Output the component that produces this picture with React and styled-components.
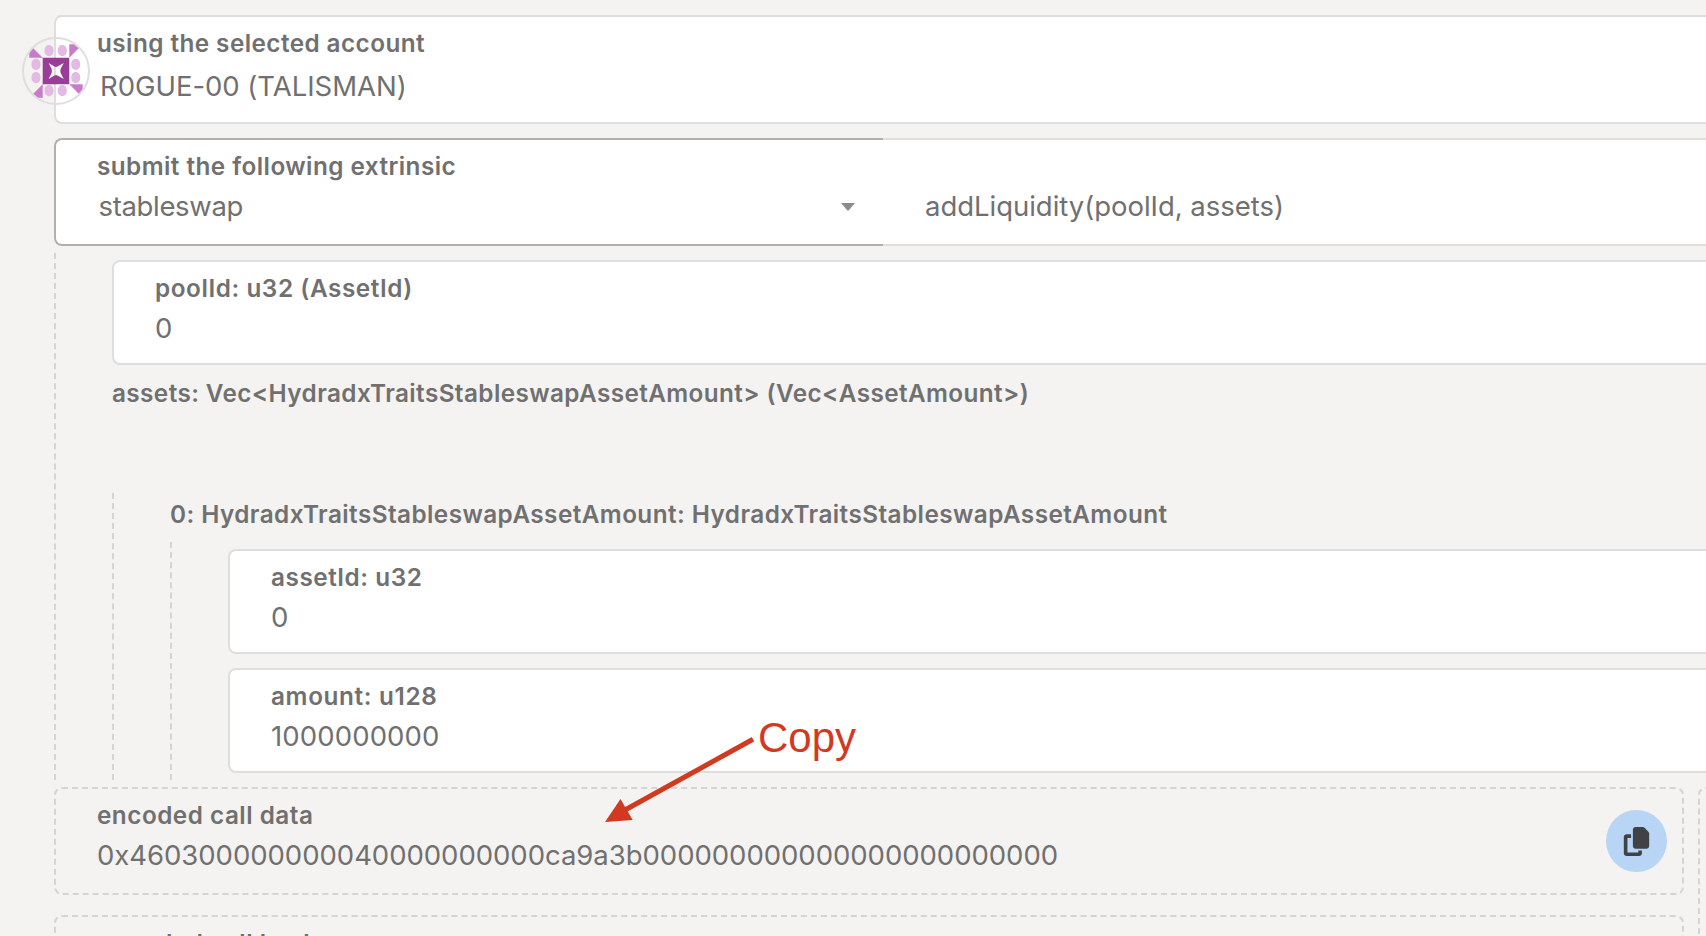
import React from "react";
import styled, { createGlobalStyle } from "styled-components";
import { FaCopy } from "react-icons/fa6";

const GlobalStyle = createGlobalStyle`
  *, *::before, *::after { box-sizing: border-box; }
  body { margin: 0; background: #f4f3f1; overflow: hidden; }
`;

const Page = styled.main`
  position: relative;
  height: 936px;
  overflow: hidden;
  padding: 15px 0 0 54px;
  color: #707070;
  font-family: Inter, "Noto Sans", sans-serif;
`;

const Form = styled.div`
  display: flex;
  flex-direction: column;
  width: 1692px;
`;

const Label = styled.div`
  font-size: 24.3px;
  font-weight: 600;
  line-height: 30px;
  letter-spacing: ${(p) => p.$track || 0}px;
  white-space: pre;
`;

const Value = styled.div`
  margin: ${(p) => p.$top ?? 8}px 0 0 ${(p) => p.$indent || 0}px;
  font-size: 27.5px;
  line-height: 34px;
  letter-spacing: ${(p) => p.$track || 0}px;
  white-space: pre;
`;

const Field = styled.section`
  position: relative;
  height: ${(p) => p.$height || 105}px;
  padding: 11px 41px 0;
  background: #fff;
  border: 2px solid #dedede;
  border-radius: 8px;
`;

const Avatar = styled.svg`
  position: absolute;
  top: 20px;
  left: -34px;
  width: 68px;
  height: 68px;
`;

const ExtrinsicRow = styled.div`
  display: flex;
  height: 108px;
  margin-top: 14px;
`;

const ModuleSelect = styled(Field)`
  width: 829px;
  height: 108px;
  border-color: #b0b0b0;
  border-right: 0;
  border-radius: 8px 0 0 8px;
`;

const SelectLine = styled.div`
  display: flex;
  justify-content: space-between;
  align-items: center;
`;

const Caret = styled.svg`
  width: 14px;
  height: 8px;
  margin: 10px -13px 0 0;
`;

const MethodSelect = styled(Field)`
  flex: 1;
  height: 108px;
  padding-top: 41px;
  border-left: 0;
  border-radius: 0 8px 8px 0;
`;

const Nest = styled.div`
  display: flex;
  flex-direction: column;
  margin-top: ${(p) => p.$gap}px;
  padding: ${(p) => p.$top}px 0 0 56px;
  border-left: 2px dashed #d4d4d3;
`;

const FieldStack = styled.div`
  display: flex;
  flex-direction: column;
  gap: 14px;
  padding-bottom: 7px;
`;

const Heading = styled(Label)`
  margin-top: ${(p) => p.$top}px;
`;

const Outputs = styled.div`
  display: flex;
  gap: 14px;
  margin-top: 7px;
`;

const OutputColumn = styled.div`
  display: flex;
  flex-direction: column;
  gap: 20px;
  width: 1630px;
`;

const Output = styled(Field)`
  height: ${(p) => p.$height || 108}px;
  background: transparent;
  border: 2px dashed #d4d4d3;
`;

const SideOutput = styled(Output)`
  width: 48px;
  height: 236px;
  padding: 0;
`;

const OutputBody = styled.div`
  display: flex;
  justify-content: space-between;
`;

const CopyButton = styled.button`
  display: grid;
  place-items: center;
  width: 61px;
  height: 62px;
  margin: 10px -26px 0 0;
  padding: 0;
  border: 0;
  border-radius: 50%;
  background: #b8d5f5;
  color: #3f4347;
  font-size: 29px;
`;

const Annotation = styled.div`
  position: absolute;
  top: 714px;
  left: 600px;
  width: 270px;
  height: 116px;
  color: #d13a21;
`;

const Arrow = styled.svg`
  display: block;
  width: 160px;
  height: 116px;
`;

const Note = styled.span`
  position: absolute;
  top: 0;
  left: 158px;
  font: 42px/48px "Liberation Sans", Arial, sans-serif;
`;

const dots = [
  [49, 50.7], [62.3, 50.7], [36, 64.3], [36, 77.7],
  [75.7, 64.3], [75.7, 77.7], [49, 90.7], [62.3, 90.7],
];

function Identicon() {
  return (
    <Avatar viewBox="22 37 68 68" aria-hidden="true">
      <clipPath id="badge"><circle cx="56" cy="71" r="32.5" /></clipPath>
      <g clipPath="url(#badge)">
        <path fill="#c87bc8" d="M29.3 44.3V57.7H42.7ZM69.3 44.3H82.7L69.3 57.7ZM69.3 84.3H82.7V97.7ZM42.7 84.3V97.7H29.3Z" />
        {dots.map(([x, y]) => (
          <rect key={`${x}-${y}`} x={x - 4.5} y={y - 5.6} width="9" height="11.2" rx="4.4" ry="5" fill="#e2bae3" />
        ))}
        <path
          fill="#983d98"
          fillRule="evenodd"
          d="M42.7 57.7H69.3V84.3H42.7ZM48.6 63L54.5 66.6Q56 67.2 57.5 66.6L63.8 63L60.6 69Q60 71 60.6 73L63.8 79L57.5 75.4Q56 74.8 54.5 75.4L48.6 79L51.6 73Q52.2 71 51.6 69Z"
        />
      </g>
      <circle cx="56" cy="71" r="33" fill="none" stroke="#dedede" strokeWidth="2" />
    </Avatar>
  );
}

export default function App() {
  return (
    <Page>
      <GlobalStyle />
      <Form>
        <Field $height={109}>
          <Identicon />
          <Label $track={0.435}>using the selected account</Label>
          <Value $top={11} $indent={3} $track={-0.03}>R0GUE-00 (TALISMAN)</Value>
        </Field>

        <ExtrinsicRow>
          <ModuleSelect>
            <Label $track={0.448}>submit the following extrinsic</Label>
            <SelectLine>
              <Value $indent={1.5} $track={-0.34}>stableswap</Value>
              <Caret viewBox="0 0 14 8"><path fill="#8c8c8c" d="M0 0H14L8 7Q7 8 6 7Z" /></Caret>
            </SelectLine>
          </ModuleSelect>
          <MethodSelect>
            <Value $indent={1} $track={-0.03}>addLiquidity(poolId, assets)</Value>
          </MethodSelect>
        </ExtrinsicRow>

        <Nest $gap={7} $top={7}>
          <Field>
            <Label $track={0.57}>poolId: u32 (AssetId)</Label>
            <Value>0</Value>
          </Field>
          <Heading $top={13} $track={0.405}>{"assets: Vec<HydradxTraitsStableswapAssetAmount> (Vec<AssetAmount>)"}</Heading>
          <Nest $gap={85} $top={6}>
            <Heading $top={0} $track={0.438}>0: HydradxTraitsStableswapAssetAmount: HydradxTraitsStableswapAssetAmount</Heading>
            <Nest $gap={13} $top={7}>
              <FieldStack>
                <Field>
                  <Label $track={0.54}>assetId: u32</Label>
                  <Value>0</Value>
                </Field>
                <Field>
                  <Label $track={0.65}>amount: u128</Label>
                  <Value $track={0.12}>1000000000</Value>
                </Field>
              </FieldStack>
            </Nest>
          </Nest>
        </Nest>

        <Outputs>
          <OutputColumn>
            <Output>
              <OutputBody>
                <div>
                  <Label $track={0.5}>encoded call data</Label>
                  <Value $track={-0.035}>0x460300000000040000000000ca9a3b000000000000000000000000</Value>
                </div>
                <CopyButton aria-label="copy"><FaCopy /></CopyButton>
              </OutputBody>
            </Output>
            <Output>
              <Label $track={0.5}>encoded call hash</Label>
            </Output>
          </OutputColumn>
          <SideOutput />
        </Outputs>
      </Form>

      <Annotation>
        <Arrow viewBox="600 714 160 116">
          <path d="M753 739.3L625 810" stroke="currentColor" strokeWidth="5" />
          <path d="M605 822L620.5 799L632.7 820Z" fill="currentColor" />
        </Arrow>
        <Note>Copy</Note>
      </Annotation>
    </Page>
  );
}
